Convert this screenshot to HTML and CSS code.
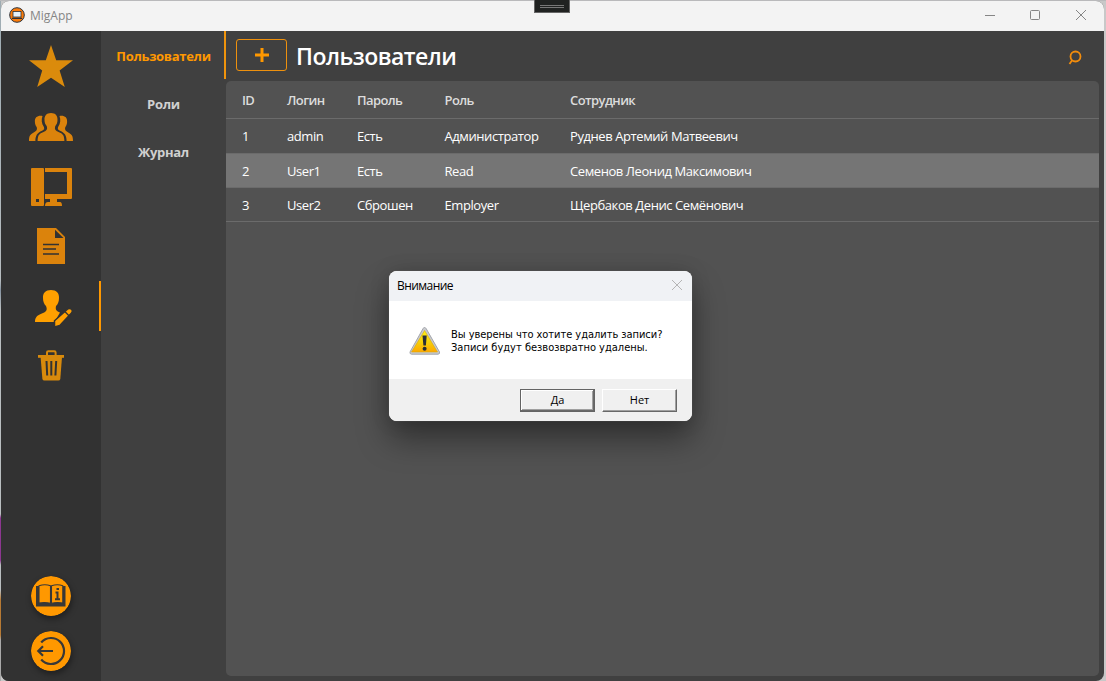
FILE: index.html
```
<!DOCTYPE html>
<html lang="ru">
<head>
<meta charset="utf-8">
<title>MigApp</title>
<link rel="stylesheet" href="styles.css">
</head>
<body>
<div class="window">
  <header class="titlebar">
    <svg class="app-icon" width="16" height="16" viewBox="0 0 16 16"><circle cx="8" cy="8" r="7.300" fill="#fc7c0a" stroke="#2b333d" stroke-width="1"/><rect x="4" y="4.500" width="8" height="5.500" fill="#e6f1f8" stroke="#29323c" stroke-width=".8"/><path d="M3 11.300h10" stroke="#29323c" stroke-width="1.200"/></svg>
    <span class="app-name">MigApp</span>
    <svg class="controls" width="102" height="12" viewBox="0 0 102 12" fill="none" stroke="#858585" stroke-width="1"><path d="M0 6.500h10"/><rect x="45.500" y="1.500" width="9" height="9" rx="1"/><path d="M91 1l10 10M101 1L91 11"/></svg>
  </header>
  <div class="body">
    <nav class="sidebar">
      <svg class="nav-icon" width="100" height="60" viewBox="1 36 100 60"><path fill="#db8b0c" d="M51 45l5.200 15.300H73L59.600 70.500 64.800 87 51 77.700 37.200 87l5-16.500L29 60.300h16.800z"/></svg>
      <svg class="nav-icon" width="100" height="60" viewBox="1 96 100 60" fill="#db830c"><path d="M51 113c4.500 0 6.800 2.800 6.500 7 0 2.500-.8 4.500-2.300 6.200-.9 3 .2 4.500 3.300 5.800 4.500 1.800 5.700 3.300 5.900 9H37.600c.2-5.700 1.400-7.200 5.900-9 3.100-1.300 4.200-2.800 3.300-5.800-1.500-1.700-2.300-3.700-2.300-6.200-.3-4.200 2-7 6.500-7z"/><path d="M42.500 116c-5-.8-8 1.500-7.600 6 .1 2.200.7 3.700 1.800 5 .8 2.500-.1 4-3 5.500-3.500 1.800-4.700 3.500-4.700 8.500h6.400c0-5.500 1.800-8.400 6.600-10.300 2.200-1 2.500-1.900 1.900-3.700-2.500-3.700-2.700-7.500-1.400-11zM59.500 116c5-.8 8 1.500 7.600 6-.1 2.200-.7 3.700-1.800 5-.8 2.500.1 4 3 5.500 3.500 1.800 4.700 3.500 4.700 8.500h-6.400c0-5.500-1.800-8.400-6.600-10.300-2.200-1-2.500-1.900-1.900-3.700 2.500-3.700 2.700-7.500 1.400-11z"/></svg>
      <svg class="nav-icon" width="100" height="60" viewBox="1 156 100 60" fill="#db830c"><path fill-rule="evenodd" d="M32 168h11q1 0 1 1v36q0 1-1 1H32q-1 0-1-1v-36q0-1 1-1zm4 31v3h3v-3z"/><path d="M45 168h26q1 0 1 1v29q0 1-1 1H45v-5h22v-22H45z"/><path d="M50 199h7v3h3q2 0 2 4H45q0-4 3-4h2z"/></svg>
      <svg class="nav-icon" width="100" height="60" viewBox="1 216 100 60"><path fill="#db830c" d="M37 228h19l9 9v27H37z"/><path fill="#323232" d="M55 229.800V238h8.500z"/><path d="M43 244.500h16M43 249h13M43 254h16" stroke="#323232" stroke-width="1.700"/></svg>
      <div class="active-nav"><svg class="nav-icon" width="98" height="60" viewBox="1 276 98 60" fill="#ffa000"><path d="M51 290c5.500 0 8.300 3 8 8 0 3.500-1 6-3 8-.8 4 .5 5 4 6.500l-5.500 9.500H35c0-5.500 3.200-7.200 8-9 3.800-1.400 4.400-3.500 3-7-2-2-3-4.500-3-8-.3-5 2.500-8 8-8z"/><path stroke="#323232" stroke-width="1.500" d="M54.500 327v-6.200L68 308.800q2.300-1.100 3.800.6 1.300 2-.3 3.700L59.800 325.500z"/><path stroke="#323232" stroke-width="1.300" d="M64.800 311.500l4.900 5"/></svg></div>
      <svg class="nav-icon" width="100" height="60" viewBox="1 336 100 60" fill="none"><path d="M47 355v-2.500q0-1.300 1.300-1.300h6q1.300 0 1.300 1.300v2.500" stroke="#d88a0c" stroke-width="2"/><path d="M38 355h26v2.800H38z" fill="#d88a0c"/><path d="M40.600 357h21.400L60.300 379q-.3 1.600-2 1.600H44.400q-1.700 0-2-1.600z" fill="#d88a0c"/><path d="M46.500 361l.7 14.500M51.300 361v14.500M56.200 361l-.8 14.500" stroke="#323232" stroke-width="2"/></svg>
      <div class="sidebar-footer">
        <svg class="round-button" width="40" height="40" viewBox="31 576 40 40"><circle cx="51" cy="596" r="20" fill="#ff9800"/><path d="M38 586h-2v20.500h29.500V586h-2" fill="#383838"/><path d="M39 585.800q6-2 11.500 0v17.500Q45 602 39 603zM51.500 585.800q6-2 11.300 0V603q-6-1-11.300.3z" fill="#ff9800" stroke="#383838" stroke-width="1.100"/><path d="M55.500 592.500h2v6M55 599.300h5M56.500 589h2.500" stroke="#383838" stroke-width="2" fill="none"/></svg>
        <svg class="round-button" width="40" height="40" viewBox="31 631 40 40"><circle cx="51" cy="651" r="20" fill="#ff9800"/><path d="M41.200 642.500a13 13 0 1 1 0 17M53 651H39M43 646.300L38.300 651l4.700 4.700" fill="none" stroke="#383838" stroke-width="2.200"/></svg>
      </div>
    </nav>
    <nav class="subnav">
      <div class="tab tab-active">Пользователи</div>
      <div class="tab">Роли</div>
      <div class="tab">Журнал</div>
    </nav>
    <main class="content">
      <div class="toolbar">
        <div class="add"><svg width="14" height="14" viewBox="0 0 14 14"><path d="M7 0v14M0 7h14" stroke="#ff9800" stroke-width="3"/></svg></div>
        <h1 class="heading">Пользователи</h1>
        <svg class="search" width="14" height="16" viewBox="0 0 14 16" fill="none" stroke="#f28c0c" stroke-width="1.800"><circle cx="7.500" cy="6.500" r="5"/><path d="M4.300 10L1.500 14"/></svg>
      </div>
      <section class="table">
        <div class="row row-head"><span>ID</span><span>Логин</span><span>Пароль</span><span>Роль</span><span>Сотрудник</span></div>
        <div class="row row-first"><span>1</span><span>admin</span><span>Есть</span><span>Администратор</span><span>Руднев Артемий Матвеевич</span></div>
        <div class="row row-selected"><span>2</span><span>User1</span><span>Есть</span><span>Read</span><span>Семенов Леонид Максимович</span></div>
        <div class="row"><span>3</span><span>User2</span><span>Сброшен</span><span>Employer</span><span>Щербаков Денис Семёнович</span></div>
      </section>
    </main>
  </div>
</div>
<div class="grip"><i></i><i></i></div>
<div class="dialog">
  <div class="dialog-title"><span class="dialog-name">Внимание</span><svg width="12" height="12" viewBox="0 0 12 12"><path d="M1 1l10 10M11 1L1 11" stroke="#b5b5b5"/></svg></div>
  <div class="dialog-body">
    <svg width="32" height="30" viewBox="0 0 32 30"><defs><linearGradient id="warn" x2="0" y2="1"><stop stop-color="#fff21a"/><stop offset=".55" stop-color="#f6cf08"/><stop offset="1" stop-color="#ffa800"/></linearGradient></defs><path d="M15.500 1.500q1 0 1.700 1.200L30.500 26q.6 2-1.500 2.200H2.500Q.5 28 1 26L14 2.700q.5-1.200 1.500-1.200z" fill="#c9cbd0" stroke="#a3a5aa"/><path d="M15.600 4.500L28.500 26h-26z" fill="url(#warn)" stroke="#d9a709" stroke-width=".6"/><path d="M13.500 9.500h4.200l-.8 10h-2.500z" fill="#292e36"/><circle cx="15.600" cy="22.800" r="2" fill="#292e36"/></svg>
    <div class="message"><div class="line-one">Вы уверены что хотите удалить записи?</div><div class="line-two">Записи будут безвозвратно удалены.</div></div>
  </div>
  <div class="dialog-actions"><div class="button button-default">Да</div><div class="button">Нет</div></div>
</div>
</body>
</html>
```
FILE: styles.css
```
* { box-sizing: border-box; }
body {
  margin: 0;
  width: 1106px;
  height: 681px;
  overflow: hidden;
  padding: 1px 2px 0 1px;
  background: linear-gradient(#b9b9bb 0 1px, transparent 1px), linear-gradient(#9dabb2 0, #b7bdc0 280px, #8794a2 290px, #b9bec0 310px 514px, #8c3790 518px 560px, #b9bec0 565px 590px, #b77a34 600px 635px, #aaa 640px) 0 0 / 1px 100% no-repeat, #c8c8c8;
  font-family: "Open Sans", "Noto Sans", sans-serif;
  font-size: 13px;
}
.window { height: 680px; border-radius: 8px; overflow: hidden; background: #404040; display: flex; flex-direction: column; }
.titlebar { height: 30px; background: #f3f3f3; display: flex; align-items: center; padding: 0 17px 2px 8px; }
.app-name { color: #858585; font-size: 12px; margin-left: 5px; padding-top: 1px; }
.controls { margin-left: auto; }
.body { flex: 1; display: flex; min-height: 0; }
.sidebar { width: 100px; background: #323232; padding-top: 5px; display: flex; flex-direction: column; }
.nav-icon { display: block; flex: none; }
.active-nav { height: 60px; background: linear-gradient(#ff9800, #ff9800) 98px 5px / 2px 50px no-repeat; }
.sidebar-footer { margin: auto 0 10px 30px; display: flex; flex-direction: column; gap: 15px; }
.round-button { border-radius: 50%; box-shadow: 1px 3px 6px rgba(0, 0, 0, .4); }
.subnav { width: 125px; }
.tab { height: 48px; display: flex; align-items: center; justify-content: center; padding-top: 2px; color: #d0d0d0; font-weight: 700; letter-spacing: -.3px; }
.tab-active { color: #ff9800; border-right: 2px solid #f0940c; padding-left: 2px; }
.content { flex: 1; padding: 0 5px 5px 0; display: flex; flex-direction: column; }
.toolbar { height: 50px; display: flex; align-items: center; padding: 0 17px 0 10px; }
.add { width: 51px; height: 32px; border: 1px solid #ee910e; border-radius: 3px; display: flex; align-items: center; justify-content: center; margin-bottom: 2px; }
.heading { margin: 0 0 0 9px; color: #fff; font-size: 23px; font-weight: 600; line-height: 32px; letter-spacing: -.52px; }
.search { margin: 4px 0 0 auto; }
.table { flex: 1; background: #525252; border-radius: 5px; overflow: hidden; }
.row { display: grid; grid-template-columns: 45px 70px 87.5px 125.5px 1fr; padding-left: 16px; height: 34px; align-items: center; border-bottom: 1px solid #6b6b6b; color: #fff; white-space: nowrap; letter-spacing: -.42px; }
.row-head { height: 38px; color: #dcdcdc; font-weight: 600; letter-spacing: -.6px; }
.row-first { height: 35px; }
.row-selected { background: #757575; }
.grip { position: absolute; left: 534px; top: 0; width: 36px; height: 13px; background: #202221; border: 1px solid #666; border-top: 0; padding: 5px 5px; display: flex; flex-direction: column; gap: 1px; }
.grip i { display: block; height: 1px; flex: none; background: #777; }
.dialog { position: absolute; left: 389px; top: 271px; width: 303px; height: 150px; border-radius: 8px; overflow: hidden; background: #fff; color: #000; box-shadow: 0 0 1px #777, 0 18px 32px rgba(0, 0, 0, .4), 0 0 20px rgba(0, 0, 0, .14); }
.dialog-title { height: 30px; background: #f0f2f5; display: flex; justify-content: space-between; align-items: center; padding: 0 9px 2px 8px; font-size: 12px; letter-spacing: -.55px; }
.dialog-name { padding-top: 1px; }
.dialog-body { height: 78px; padding: 1px 0 0 20px; display: flex; align-items: center; gap: 10px; }
.message { font: 11px/13px "DejaVu Sans Condensed", "DejaVu Sans", sans-serif; white-space: nowrap; }
.line-one { letter-spacing: -.04px; }
.dialog-actions { height: 42px; background: #f0f0f0; display: flex; justify-content: flex-end; gap: 7px; padding: 10px 15px 0 0; }
.button { width: 75px; height: 23px; border: 1px solid; border-color: #fff #686868 #686868 #fff; box-shadow: inset -1px -1px #a0a0a0; font-size: 11px; line-height: 20px; text-align: center; }
.button-default { border-color: #646464; box-shadow: inset -1px -1px #696969, inset 1px 1px #fff, inset -2px -2px #a0a0a0; }
```
